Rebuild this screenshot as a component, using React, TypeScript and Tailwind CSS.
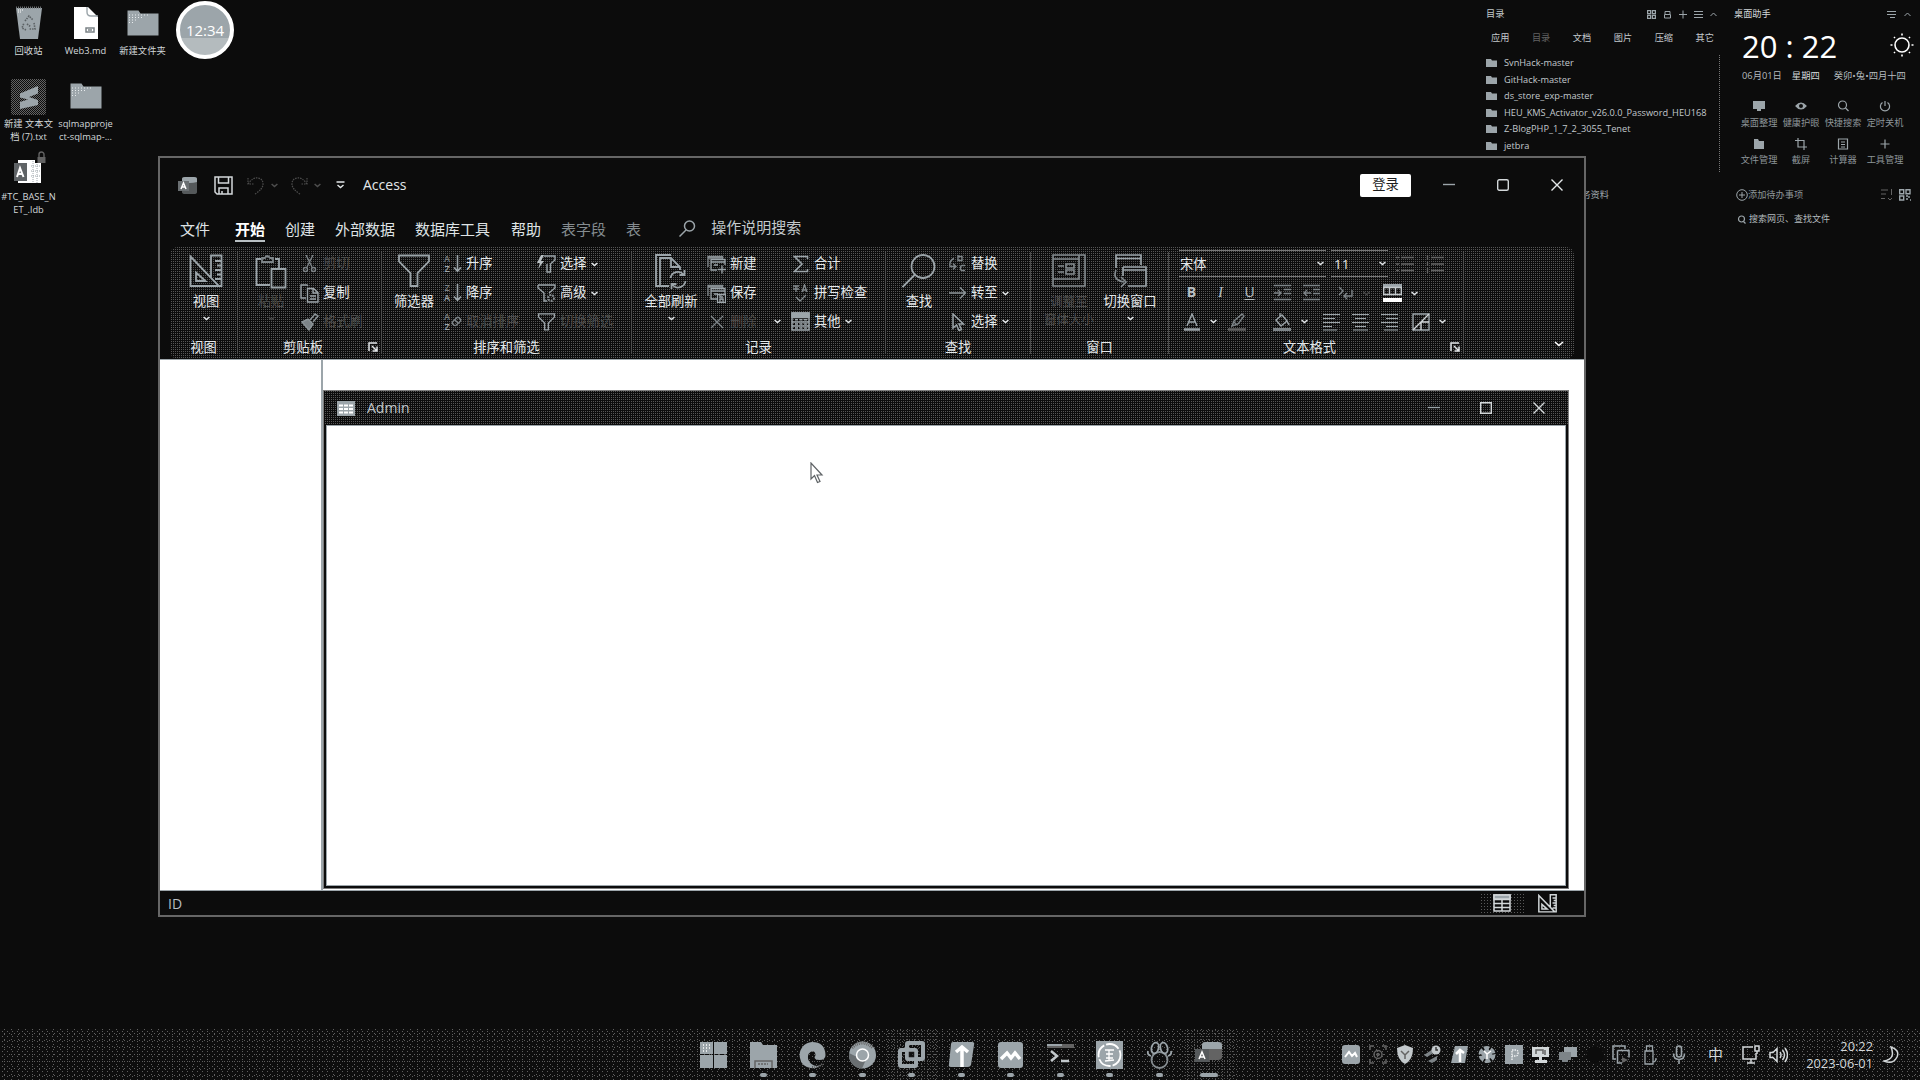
import React from "react";

type Kids = { children?: React.ReactNode };

const L = "#9ca5aa";
const D = "#636363";

function Svg({ w = 18, h = 18, box, c = L, sw = 1.4, cls = "", children }: Kids & { w?: number; h?: number; box?: string; c?: string; sw?: number; cls?: string }) {
  return (
    <svg width={w} height={h} viewBox={box ?? `0 0 ${w} ${h}`} fill="none" stroke={c} strokeWidth={sw} className={`shrink-0 ${cls}`}>
      {children}
    </svg>
  );
}

function Caret({ c = "#e4e8ea", cls = "" }: { c?: string; cls?: string }) {
  return (
    <Svg w={7} h={5} c={c} sw={1.5} cls={cls}>
      <path d="M.6 1l2.9 2.6L6.4 1" />
    </Svg>
  );
}

/* ---------- desktop icons ---------- */

function FolderBig() {
  return (
    <Svg w={32} h={28}>
      <path d="M.5 1.5h11l2 3h18v22h-31z" fill={L} stroke="none" />
      <path d="M2 6h20M2 8.500h14M2 11h8M2 13.500h4" stroke="#e8ecee" strokeWidth="1" strokeDasharray="1 2" />
    </Svg>
  );
}

function DeskItem({ icon, children }: Kids & { icon: React.ReactNode }) {
  return (
    <div className="flex h-[73px] w-[57px] flex-col items-center">
      <div className="flex h-[43px] items-center justify-center">{icon}</div>
      <div className="text-center text-[9.3px] leading-[13px] whitespace-nowrap text-[#d3d8da]">{children}</div>
    </div>
  );
}

function Desktop() {
  return (
    <div className="grid w-[171px] grid-cols-3 pt-[1px]">
      <DeskItem icon={
        <Svg w={28} h={34}>
          <path d="M1 2h26l-4 31H5z" fill={L} stroke="none" />
          <path d="M1 1.500h26" stroke="#6c7073" strokeWidth="2" strokeDasharray="1 1" />
          <path d="M10 15l4-5 4 4M19 17l1 6h-6M11 24l-4-2 2-5M12 18l4 3" stroke="#5b6063" strokeWidth="1.6" strokeDasharray="1.500 1" />
          <path d="M3 4h5M3 6h3" stroke="#fff" strokeDasharray="1 1" strokeWidth="1" />
        </Svg>}>回收站</DeskItem>
      <DeskItem icon={
        <Svg w={26} h={34}>
          <path d="M1 1h14l10 10v22H1z" fill="#fff" stroke="none" />
          <path d="M14 1v5q0 4 4 4h7" stroke={L} />
          <path d="M13 22h8v4h-8zM15 24h4" stroke="#7b8286" strokeWidth="1.5" />
        </Svg>}>Web3.md</DeskItem>
      <DeskItem icon={<FolderBig />}>新建文件夹</DeskItem>
      <DeskItem icon={
        <div className="mt-[3px] flex h-[36px] w-[35px] items-center justify-center rounded-[2px] bg-[#0c0c0c] bg-[conic-gradient(#636363_25%,#0c0c0c_0_50%,#636363_0_75%,#0c0c0c_0)] bg-[length:2px_2px]">
          <Svg w={22} h={26}>
            <path d="M2 9.500L20 2v7.500L11 13l9 3v5L2 25v-7l8-2.500-8-2z" fill={L} stroke="none" />
          </Svg>
        </div>}>新建 文本文<br />档 (7).txt</DeskItem>
      <DeskItem icon={<FolderBig />}>sqlmapproje<br />ct-sqlmap-...</DeskItem>
      <div />
      <DeskItem icon={
        <Svg w={34} h={34} cls="mt-[-2px] ml-[3px]">
          <path d="M5 9h17v3h6v20H5z" fill="#fff" stroke="none" />
          <path d="M18 15h10M18 20h10M18 25h10M20 10v22M24 13v19" stroke={L} strokeWidth="1" strokeDasharray="1 1" />
          <path d="M1 12h13v18H1z" fill="#5f6366" stroke="none" />
          <path d="M4 26l3-9 3.500 9M5 23h4.500" stroke="#fff" strokeWidth="2" />
          <path d="M24.500 6h8v6h-8z" fill={D} stroke="none" />
          <path d="M26 6V3.500a2.500 2.500 0 015 0V6" stroke={D} />
        </Svg>}>#TC_BASE_N<br />ET_.ldb</DeskItem>
    </div>
  );
}

/* ---------- right-hand widgets ---------- */

const files = ["SvnHack-master", "GitHack-master", "ds_store_exp-master", "HEU_KMS_Activator_v26.0.0_Password_HEU168", "Z-BlogPHP_1_7_2_3055_Tenet", "jetbra"];

function Catalog() {
  return (
    <div className="w-[236px] text-[9.2px] leading-[12px] text-[#c3c9cc]">
      <div className="flex h-[12px] items-center">
        <span>目录</span>
        <div className="ml-auto mr-[5px] flex items-center gap-[7px]">
          <Svg w={9} h={9} sw={1.2}><path d="M.6.6h3v3h-3zM5.400.6h3v3h-3zM.6 5.400h3v3h-3zM5.400 5.400h3v3h-3z" /></Svg>
          <Svg w={9} h={9} sw={1}><path d="M2 4V1.500h5V4M1.500 4.500h6V8h-6z" /></Svg>
          <Svg w={8} h={9} sw={1}><path d="M4 .5v8M0 4.500h8" /></Svg>
          <Svg w={9} h={9} sw={1}><path d="M0 1.500h9M0 4.500h9M0 7.500h9" /></Svg>
          <Svg w={7} h={5} sw={1}><path d="M.5 4l3-3 3 3" /></Svg>
        </div>
      </div>
      <div className="mt-[12px] flex justify-between pr-[8px] pl-[5px]">
        <span>应用</span><span className="text-[#636363]">目录</span><span>文档</span><span>图片</span><span>压缩</span><span>其它</span>
      </div>
      <div className="mt-[11px] mr-[2px] flex h-[117px] flex-col border-r border-dotted border-[#777]">
        {files.map((f) => (
          <div key={f} className="flex h-[16.5px] shrink-0 items-center gap-[7px]">
            <Svg w={11} h={8}><path d="M0 0h5l1 1.500h5V8H0z" fill={L} stroke="none" /></Svg>
            <span className="text-[9.220px] whitespace-nowrap">{f}</span>
          </div>
        ))}
      </div>
    </div>
  );
}

const tools: [string, React.ReactNode][] = [
  ["桌面整理", <path key="a" d="M0 1h12v8H8v2H4V9H0z" fill={L} stroke="none" />],
  ["健康护眼", <g key="b"><path d="M1 6q5-6 10 0q-5 6-10 0z" fill={L} /><circle cx="6" cy="6" r="2" fill="#0c0c0c" stroke="none" /></g>],
  ["快捷搜索", <g key="c"><circle cx="5.500" cy="5" r="4" /><path d="M8.500 8l3 3" /></g>],
  ["定时关机", <path key="d" d="M6 1v5M3.500 2.500a4.600 4.600 0 105 0" />],
  ["文件管理", <path key="e" d="M1 1h4l1 2h5v8H1z" fill={L} stroke="none" />],
  ["截屏", <path key="f" d="M3 0v9h9M0 2.500h9V12" />],
  ["计算器", <path key="g" d="M1.500 1h9v10h-9zM4 4h4M4 6.500h4M4 9h4" />],
  ["工具管理", <path key="h" d="M6 1.500v9M1.500 6h9" />],
];

function Helper() {
  return (
    <div className="w-[180px] text-[9.2px] leading-[12px] text-[#b4bbbe]">
      <div className="flex h-[12px] items-center text-[#d3d8da]">
        <span>桌面助手</span>
        <div className="ml-auto mr-[3px] flex items-center gap-[8px]">
          <Svg w={9} h={7} sw={1}><path d="M0 .5h9M0 3.500h9M3 6.500h5" /></Svg>
          <Svg w={7} h={5} sw={1}><path d="M.5 4l3-3 3 3" /></Svg>
        </div>
      </div>
      <div className="mt-[5px] flex h-[42px] items-center">
        <span className="ml-[8px] text-[31px] leading-[42px] whitespace-pre text-white [font-family:'Open_Sans','Noto_Sans',sans-serif]">20 : 22</span>
        <Svg w={24} h={24} c="#fff" sw={1.6} cls="ml-auto mt-[-3px]">
          <circle cx="12" cy="12" r="7" />
          <path d="M12 .5v2M12 21.500v2M.5 12h2M21.500 12h2M4 4l1 1M19 19l1 1M4 20l1-1M19 5l1-1" />
        </Svg>
      </div>
      <div className="mt-[2px] ml-[8px] flex h-[14px] items-center text-[9.300px] whitespace-nowrap">
        <span>06月01日</span><span className="ml-[10px] text-[#d3d8da]">星期四</span><span className="ml-[14px]">癸卯•兔•四月十四</span>
      </div>
      <div className="mt-[17px] grid grid-cols-4 pr-[8px] pl-[4px]">
        {tools.map(([t, p]) => (
          <div key={t} className="flex h-[37.500px] flex-col items-center">
            <Svg w={12} h={12} sw={1.2}>{p}</Svg>
            <span className="mt-[4.500px] whitespace-nowrap text-[#8d9599]">{t}</span>
          </div>
        ))}
      </div>
      <div className="mt-[13px] ml-[2px] flex h-[14px] items-center">
        <Svg w={12} h={12} sw={1}><circle cx="6" cy="6" r="5.300" /><path d="M6 3v6M3 6h6" /></Svg>
        <span className="text-[#8d9599]">添加待办事项</span>
        <Svg w={12} h={12} sw={1} c={D} cls="ml-auto"><path d="M0 1h7M0 5h5M0 9.500h4M10.500 0v6M7 9l2 2 2-2" /></Svg>
        <Svg w={12} h={12} sw={1.4} cls="ml-[6px] mr-[3px]"><path d="M.7.7h4v4h-4zM7 .7h4v4H7zM.7 7h4v4h-4zM7 7h2M10 7v2M7 10h2M11 11h1" /></Svg>
      </div>
      <div className="mt-[10px] ml-[3px] flex h-[14px] items-center gap-[3px]">
        <Svg w={9} h={9} sw={1.2}><circle cx="4.500" cy="4" r="3" /><path d="M6.500 6.500l2 2" /></Svg>
        <span className="text-[9px]">搜索网页、查找文件</span>
      </div>
    </div>
  );
}

/* ---------- Access glyphs ---------- */

function AccessLogo() {
  return (
    <Svg w={19} h={19}>
      <path d="M4 3q0-2 3-2h9q3 0 3 2v13q0 2-3 2H7q-3 0-3-2z" fill="#55595b" stroke="none" />
      <path d="M4 3q0-2 3-2h9q3 0 3 2v3q-7 2-15 0z" fill={L} stroke="none" />
      <path d="M0 5h11v10H0z" fill="#6a6f72" stroke="none" />
      <path d="M3 13l2.500-6L8 13M4 11h3" stroke="#fff" strokeWidth="1.5" />
    </Svg>
  );
}

function Ruler({ s = 34, c = L, sw = 1.8 }: { s?: number; c?: string; sw?: number }) {
  return (
    <Svg w={s} h={s} box="0 0 34 34" c={c} sw={sw}>
      <path d="M1.500 2.500L30 32H1.500zM7 18.500L16.500 27H7zM22 24V1.500h10.500V32H30M26 7h6M28 11.500h4M26 16h6M28 20.500h4M26 25h6" />
    </Svg>
  );
}

function Funnel({ w = 32, h = 34, c = L, sw = 1.8 }: { w?: number; h?: number; c?: string; sw?: number }) {
  return (
    <Svg w={w} h={h} box="0 0 32 34" c={c} sw={sw}>
      <path d="M1 1.500h30v6L19.500 19v13h-7V19L1 7.500z" />
    </Svg>
  );
}

function SortIcon({ a, b, clear }: { a: string; b: string; clear?: boolean }) {
  return (
    <div className="flex w-[19px] shrink-0 items-center">
      <div className="flex w-[8px] flex-col items-center text-[9px] leading-[10px] font-semibold text-[#7a8083]">
        <span>{a}</span><span className="text-[#9ca5aa]">{b}</span>
      </div>
      {clear ? (
        <Svg w={11} h={18} c="#7d8488"><rect x="1" y="6" width="9" height="5" rx="2" transform="rotate(-45 5.500 8.500)" /><path d="M4 7l3 3" /></Svg>
      ) : (
        <Svg w={11} h={18} c={L} sw={1.6}><path d="M6.500 0v16M3 12.500l3.500 3.800L10 12.500" /></Svg>
      )}
    </div>
  );
}

function Align({ k }: { k: number }) {
  const d = ["M0 1.500h17M0 5.500h12M0 9.500h17M0 13.500h9M0 17h14", "M0 1.500h17M3 5.500h11M0 9.500h17M3 13.500h11M1 17h15", "M0 1.500h17M5 5.500h12M0 9.500h17M5 13.500h12M3 17h14"][k];
  return <Svg w={17} h={18} sw={1.1}><path d={d} /></Svg>;
}

/* ---------- ribbon building blocks ---------- */

function Group({ w, title, launcher, children }: Kids & { w: string; title: string; launcher?: boolean }) {
  return (
    <div className={`flex h-full shrink-0 ${w}`}>
      <div className="flex min-w-0 flex-1 flex-col">
        <div className="flex h-[86px]">{children}</div>
        <div className={`flex h-[22px] items-center ${launcher ? "pr-[3px] pl-[0px]" : ""}`}>
          <span className="mt-[-1px] flex-1 text-center">{title}</span>
          {launcher && (
            <Svg w={10} h={10} c="#e4e8ea" sw={1.5}><path d="M1 9V1h8M4 4l5 5M9 4.500V9H4.500" /></Svg>
          )}
        </div>
      </div>
      <div className="mt-[2px] h-[102px] w-px bg-[#4c4c4c]" />
    </div>
  );
}

function Big({ w, icon, label, caret, dim }: { w: string; icon: React.ReactNode; label: React.ReactNode; caret?: boolean; dim?: boolean }) {
  return (
    <div className={`flex shrink-0 flex-col items-center pt-[4px] ${w}`}>
      <div className="flex h-[36px] items-start justify-center">{icon}</div>
      <div className={`mt-[3px] text-center leading-[16px] whitespace-nowrap ${dim ? "text-[#4a4a4a]" : ""}`}>{label}</div>
      {caret && <Caret c={dim ? "#4a4a4a" : undefined} cls="mt-[7px]" />}
    </div>
  );
}

function Small({ icon, label, caret, dim, gap = "ml-[4px]" }: { icon: React.ReactNode; label: string; caret?: boolean; dim?: boolean; gap?: string }) {
  return (
    <div className="flex h-[28.700px] items-center">
      <div className="flex w-[19px] shrink-0 items-center justify-center">{icon}</div>
      <span className={`mt-[-2px] ml-[4px] whitespace-nowrap ${dim ? "text-[#4a4a4a]" : ""}`}>{label}</span>
      {caret && <Caret cls={gap} />}
    </div>
  );
}

function Cell({ w = "w-[29px]", children }: Kids & { w?: string }) {
  return <div className={`flex h-full shrink-0 items-center justify-center ${w}`}>{children}</div>;
}

const FormSm = ({ k }: { k: string }) => (
  <Svg w={19} h={19} sw={1.3}>
    <path d="M1 12V1.500h14.500V4M1 3h14" stroke="#858c90" />
    <path d="M10 15H4V4.500h14V10M4 7h14M7 10h4" />
    <path d={k} stroke="#9ca5aa" />
  </Svg>
);

function Ribbon() {
  return (
    <div className="relative mx-[10px] flex h-[112px] rounded-[8px] bg-[#0c0c0c] bg-[conic-gradient(#565656_25%,#0c0c0c_0)] bg-[length:2px_2px] pt-[3px] text-[13.300px] leading-[16px] text-[#e4e8ea]">
      <Group w="w-[68px]" title="视图">
        <Big w="w-[72px]" icon={<Ruler />} label="视图" caret />
      </Group>

      <Group w="w-[144px]" title="剪贴板" launcher>
        <Big w="ml-[8px] w-[50px]" dim caret label="粘贴" icon={
          <Svg w={32} h={35} sw={1.8}>
            <path d="M6 5H1.500v26H15M20 5h4v9" /><path d="M7 8V4h3q2-4 5 0h3v4z" stroke="#7d8488" /><path d="M16.500 15h14v18.500h-14z" />
          </Svg>} />
        <div className="ml-[4px] flex flex-col">
          <Small dim label="剪切" icon={<Svg c="#7d8488"><path d="M5 0l6 12M12 0L6 12" /><circle cx="4.500" cy="14.500" r="2" /><circle cx="12.500" cy="14.500" r="2" /></Svg>} />
          <Small label="复制" icon={<Svg w={19} h={19}><path d="M6 14H1V1h6l1 1M7.500 4.500h6l4.500 4V18H7.500zM13 5v4h5M10 12h6M10 15h6" /></Svg>} />
          <Small dim label="格式刷" icon={<Svg c="#8d9599"><path d="M1 9l6-3 5 5-4 6z" fill="#7d8488" /><path d="M9 7l5-6 3 2-5 6" /></Svg>} />
        </div>
      </Group>

      <Group w="w-[250px]" title="排序和筛选">
        <Big w="ml-[4px] w-[56px]" label="筛选器" icon={<Funnel />} />
        <div className="ml-[1px] flex w-[94px] flex-col">
          <Small label="升序" icon={<SortIcon a="A" b="Z" />} />
          <Small label="降序" icon={<SortIcon a="Z" b="A" />} />
          <Small dim label="取消排序" icon={<SortIcon a="A" b="Z" clear />} />
        </div>
        <div className="flex flex-col">
          <Small caret label="选择" icon={<Svg w={19} h={18}><path d="M7 1h11v4l-4.500 4v8h-3.500V9" /><path d="M4 0L0 8h3l-2 6 6-8H4l3-6z" fill="#b8bfc2" stroke="none" /></Svg>} />
          <Small caret label="高级" icon={<Svg w={19} h={19}><path d="M1 1h17v3l-6 5M1 1v3l6 5v8h3" /><circle cx="14" cy="14" r="3" stroke="#858c90" strokeWidth="2" strokeDasharray="2 1" /></Svg>} />
          <Small dim label="切换筛选" icon={<Funnel w={19} h={18} sw={2.4} />} />
        </div>
      </Group>

      <Group w="w-[254px]" title="记录">
        <Big w="ml-[8px] w-[62px]" label="全部刷新" caret icon={
          <Svg w={33} h={35} sw={1.8}>
            <path d="M16 1H1v31h4" />
            <path d="M14 32H5V4h11l9 9v3M16 4v9h9" />
            <path d="M15.500 24a7.500 7.500 0 0113-3.500M30.500 27a7.500 7.500 0 01-13 4M29.500 16v5h-5M16.500 35v-5h5" />
          </Svg>} />
        <div className="ml-[5px] flex w-[84px] flex-col">
          <Small label="新建" icon={<FormSm k="M11 14.500h8M15 10.500v8" />} />
          <Small label="保存" icon={<FormSm k="M10.500 10.500h8v8h-8zM13 18v-3h3v3M13 11v2h3" />} />
          <Small dim caret gap="ml-[17px]" label="删除" icon={<Svg w={16} h={16} c="#7d8488"><path d="M2 2l12 12M14 2L2 14" /></Svg>} />
        </div>
        <div className="flex flex-col">
          <Small label="合计" icon={<Svg w={16} h={18} sw={1.6}><path d="M14.500 4V1.500H1.500L9 9l-7.500 7.500h13V14" /></Svg>} />
          <Small label="拼写检查" icon={<Svg w={17} h={18} c="#858c90" sw={1.3}><path d="M1 2h6M4 2v6M1 5h6M10 8l2.500-7L15 8M11 6h3M4 13l4 4 6-6" /></Svg>} />
          <Small caret label="其他" icon={<Svg w={19} h={19} sw={1.5}><path d="M1 1h17v17H1zM1 5.500h17M1 10h17M1 14h17" /><path d="M1 1h17v4H1z" fill={L} /><path d="M4 7.700h12M4 12h12M4 16h12" strokeDasharray="3 1.500" /></Svg>} />
        </div>
      </Group>

      <Group w="w-[145px]" title="查找">
        <Big w="ml-[8px] w-[50px]" label="查找" icon={<Svg w={34} h={34} sw={1.8}><circle cx="21" cy="12.500" r="11.500" /><path d="M13 20.500L.5 33" /></Svg>} />
        <div className="ml-[4px] flex flex-col">
          <Small label="替换" icon={<Svg c="#7d8488"><path d="M9 1.500h4v4H9zM9 5V0M5 3.500q-5 2-4 8h5M4 8.500l3 3-3 3M16 10.500h-3q-1.500 0-1.500 2.500t1.500 2.500h3" /></Svg>} />
          <Small caret label="转至" icon={<Svg c="#8d9599"><path d="M0 9h16M11 3.500L16.500 9 11 14.500" /></Svg>} />
          <Small caret label="选择" icon={<Svg sw={1.5}><path d="M4 1v14l3.500-3 2.500 5.500 2.500-1L10 11h4.500z" /></Svg>} />
        </div>
      </Group>

      <Group w="w-[138px]" title="窗口">
        <Big w="ml-[2px] w-[72px]" dim label={<span className="block text-[12.500px] leading-[18px]">调整至<br />窗体大小</span>} icon={
          <Svg w={34} h={34} c="#858c90" sw={1.6}><path d="M1 1h32v31H1zM1 5h26v20H1M27 1v24M6 12h6M6 18h6M14 10h8v4h-8zM14 16h8v4h-8z" /></Svg>} />
        <Big w="ml-[-4px] w-[58px]" caret label="切换窗口" icon={
          <Svg w={34} h={34} sw={1.7}><path d="M3 14V1h25v10M3 4.500h25" /><path d="M10 13h23v19H15M10 13v9M10 16h23" /><path d="M3 16q-4 10 8 12M8 23l5 5-5 5" stroke="#858c90" /></Svg>} />
      </Group>

      <Group w="w-[295px]" title="文本格式" launcher>
        <div className="flex flex-col">
          <div className="flex h-[28.700px] items-start pl-[10px]">
            <div className="flex h-[27px] w-[147px] items-center justify-between border-y border-[#777] px-[1px] pr-[2px]"><span>宋体</span><Caret /></div>
            <div className="ml-[5px] flex h-[27px] w-[57px] items-center justify-between border-y border-[#777] pr-[2px] pl-[3px]"><span className="text-[13.500px]">11</span><Caret /></div>
            <div className="flex h-[27px] items-center pl-[8px]">
              <Svg w={18} h={18} c={D}><path d="M5 2.500h13M5 9h13M5 15.500h13M0 2.500h3M0 9h3M0 15.500h3" /></Svg>
              <Svg w={18} h={18} c={D} cls="ml-[12px]"><path d="M5 2.500h13M5 9h13M5 15.500h13M1.500 0v5M1.500 7v4M1.500 13v5" /></Svg>
            </div>
          </div>
          <div className="flex h-[28.700px] items-center pl-[8px] text-[#b8bfc2]">
            <Cell><span className="mt-[-2px] text-[14px] font-bold">B</span></Cell>
            <Cell><span className="mt-[-2px] text-[15px] italic [font-family:'Liberation_Serif',serif]">I</span></Cell>
            <Cell><span className="mt-[-2px] text-[14px] underline underline-offset-2">U</span></Cell>
            <Cell w="ml-[3px] w-[30px]"><Svg w={17} h={18} c="#7d8488"><path d="M0 1.500h17M10 5.500h7M10 9.500h7M0 15.500h17M0 9h7M4 6l3 3-3 3" /></Svg></Cell>
            <Cell><Svg w={17} h={18} c="#7d8488"><path d="M0 1.500h17M10 5.500h7M10 9.500h7M0 15.500h17M1 9h7M4 6L1 9l3 3" /></Svg></Cell>
            <Cell w="ml-[8px] w-[24px]"><Svg w={16} h={16} c="#7d8488"><path d="M1 2l4 4-4 4M14 5v6H6M9 8l-3 3 3 3" /></Svg></Cell>
            <Cell w="w-[16px]"><Caret c="#4a4a4a" /></Cell>
            <Cell w="ml-[2px] w-[32px]"><Svg w={19} h={19} c="#c3c9cc"><path d="M0 0h19v4H0z" fill={L} stroke="none" /><path d="M.7 3.500h17.600v7H.7zM6.500 3v8M12.500 3v8" /><path d="M0 14h19v4H0z" fill="#fff" stroke="none" /></Svg></Cell>
            <Cell w="w-[12px]"><Caret /></Cell>
          </div>
          <div className="flex h-[28.700px] items-center pl-[8px]">
            <Cell><Svg w={16} h={18}><path d="M3 13l5-12 5 12M5 9h6" /><path d="M0 16.500h16" strokeWidth="2.500" /></Svg></Cell>
            <Cell w="w-[14px]"><Caret /></Cell>
            <Cell w="w-[33px]"><Svg w={18} h={18} c="#7d8488"><path d="M4 13l2-5 8-7 2 2-6 8zM5 8l4 4" /><path d="M0 16.500h18" strokeWidth="2.500" stroke={D} /></Svg></Cell>
            <Cell w="ml-[14px] w-[30px]"><Svg w={18} h={18}><path d="M3 7l6-5 5 6-6 5zM7 4V0M14 8l2 4" /><path d="M0 16.500h18" strokeWidth="3" stroke="#7d8488" /></Svg></Cell>
            <Cell w="w-[14px]"><Caret /></Cell>
            <Cell w="ml-[6px] w-[29px]"><Align k={0} /></Cell>
            <Cell><Align k={1} /></Cell>
            <Cell><Align k={2} /></Cell>
            <Cell w="ml-[1px] w-[32px]"><Svg w={18} h={18}><path d="M1 1h16v16H1z" /><path d="M1 17L17 1M9 9v8M9 9h8" stroke="#d3d8da" /></Svg></Cell>
            <Cell w="w-[10px]"><Caret /></Cell>
          </div>
        </div>
      </Group>
      <div className="flex flex-1 items-end justify-end pr-[10px] pb-[12px]">
        <Svg w={10} h={6} c="#fff" sw={1.6}><path d="M1 1l4 3.500L9 1" /></Svg>
      </div>
    </div>
  );
}

/* ---------- Access window ---------- */

function TitleBar() {
  return (
    <div className="flex h-[54px] items-center pl-[18px] text-[14px] text-[#e4e8ea]">
      <AccessLogo />
      <Svg w={19} h={19} c="#d3d8da" sw={1.5} cls="ml-[17px]"><path d="M1 1h17v17H3l-2-2zM4.500 1v6h10V1M5 18v-6h9v6M8 15v3" /></Svg>
      <Svg w={18} h={19} c="#4e4e4e" sw={1.2} cls="ml-[14px]"><path d="M1 2v6h6M1 8q5-7 10-6t5 6-8 10" strokeDasharray="1.500 1" /></Svg>
      <Caret c="#4e4e4e" cls="ml-[6px]" />
      <Svg w={18} h={19} c="#4e4e4e" sw={1.2} cls="ml-[12px]"><path d="M17 2v6h-6M17 8Q12 1 7 2T2 8t8 10" strokeDasharray="1.500 1" /></Svg>
      <Caret c="#4e4e4e" cls="ml-[6px]" />
      <Svg w={9} h={8} c="#e4e8ea" sw={1.4} cls="ml-[15px]"><path d="M.5 1h8M1.500 4l3 2.500 3-2.500" /></Svg>
      <span className="mt-[-1px] ml-[18px]">Access</span>
      <div className="mr-[1px] ml-auto flex items-center">
        <div className="flex h-[23px] w-[51px] items-center justify-center rounded-[2px] bg-white text-[13.300px] text-[#1c1c1c]">登录</div>
        <Svg w={12} h={12} sw={1.4} cls="ml-[32px]"><path d="M0 5.500h12" /></Svg>
        <Svg w={12} h={12} c="#d3d8da" sw={1.4} cls="ml-[42px]"><rect x=".7" y=".7" width="10.600" height="10.600" rx="1.500" /></Svg>
        <Svg w={12} h={12} c="#e4e8ea" sw={1.4} cls="mr-[20px] ml-[42px]"><path d="M.5.5l11 11M11.500.5l-11 11" /></Svg>
      </div>
    </div>
  );
}

function Tabs() {
  return (
    <div className="flex h-[35px] items-center pb-[2px] pl-[20px] text-[15px] leading-[20px] whitespace-nowrap text-[#dfe3e5]">
      <span>文件</span>
      <span className="mt-[3px] ml-[25px] border-b-2 border-[#b8bfc2] leading-[21px] font-bold text-white">开始</span>
      <span className="ml-[20px]">创建</span>
      <span className="ml-[20px]">外部数据</span>
      <span className="ml-[20px]">数据库工具</span>
      <span className="ml-[21px]">帮助</span>
      <span className="ml-[20px] text-[#858c90]">表字段</span>
      <span className="ml-[20px] text-[#858c90]">表</span>
      <Svg w={17} h={17} sw={1.5} cls="ml-[38px]"><circle cx="10.500" cy="6" r="5" /><path d="M7 10l-6.500 6.500" /></Svg>
      <span className="mt-[-3px] ml-[15px] text-[#c3c9cc]">操作说明搜索</span>
    </div>
  );
}

function AccessWindow() {
  return (
    <div className="absolute top-[156px] left-[158px] flex h-[761px] w-[1428px] flex-col border-2 border-[#666] bg-[#0c0c0c]">
      <TitleBar />
      <Tabs />
      <Ribbon />
      <div className="flex min-h-0 flex-1 border-b border-[#9ca5aa] bg-white">
        <div className="w-[163px] border-t border-r-2 border-[#9ca5aa]" />
        <div className="flex flex-1 border-t border-[#9ca5aa] pt-[30px] pr-[15px] pb-[1px]">
          <div className="flex flex-1 flex-col border border-[#7d7d7d] bg-[#0c0c0c] pr-[2px] pb-[2px] pl-[2px]">
            <div className="ml-[-2px] mr-[-2px] flex h-[34px] items-center bg-[#0c0c0c] bg-[conic-gradient(#565656_25%,#0c0c0c_0)] bg-[length:2px_2px] pl-[13px] text-[14px] text-[#c3c9cc]">
              <Svg w={18} h={15}><path d="M0 0h18v15H0z" fill={L} stroke="none" /><path d="M2 4.500h14M2 8h14M2 11.500h14" stroke="#fff" strokeWidth="2" strokeDasharray="4 1" /></Svg>
              <span className="mt-[-1px] ml-[12px]">Admin</span>
              <div className="ml-auto flex items-center">
                <Svg w={12} h={12} sw={1.3}><path d="M0 5.500h12" /></Svg>
                <Svg w={12} h={12} c="#d3d8da" sw={1.4} cls="ml-[40px]"><path d="M.7.7h10.600v10.600H.7z" /></Svg>
                <Svg w={12} h={12} c="#d3d8da" sw={1.4} cls="mr-[23px] ml-[41px]"><path d="M.5.5l11 11M11.500.5l-11 11" /></Svg>
              </div>
            </div>
            <div className="flex-1 border border-[#9ca5aa] bg-white" />
          </div>
        </div>
      </div>
      <div className="flex h-[24px] items-center pl-[8px] text-[14px] text-[#b8bfc2]">
        <span>ID</span>
        <div className="ml-auto flex h-[21px] w-[44px] items-center justify-center bg-[#0c0c0c] bg-[radial-gradient(#5a5a5a_0.6px,transparent_0.7px)] bg-[length:3px_3px]">
          <Svg w={18} h={18} c="#d3d8da" sw={1.5}><path d="M1 1h16v16H1z" fill="#0c0c0c" /><path d="M1 5.500h16M1 9.500h16M1 13.500h16M9 5v12" /><path d="M1 1h16v4H1z" fill={L} /></Svg>
        </div>
        <div className="mr-[27px] ml-[14px]"><Ruler s={19} c="#d3d8da" sw={2.6} /></div>
      </div>
    </div>
  );
}

/* ---------- taskbar ---------- */

const apps: React.ReactNode[] = [
  <g key="0"><path d="M0 1h13v12H0zM14 1h13v12H14zM0 14h13v13H0zM14 14h13v13H14z" fill={L} /><path d="M3 4h8M3 7h8M3 10h6" stroke="#fff" strokeDasharray="1 2" /></g>,
  <g key="1"><path d="M0 1h11l2 3h14v23H0z" fill={L} /><path d="M5 27v-7h17v7" stroke={D} strokeWidth="1.5" /><path d="M8 23h10" stroke={D} strokeDasharray="2 1" /></g>,
  <g key="2"><path d="M1 17A13 13 0 0113 1q13 0 13.500 13 0 5-6 5-5 0-5-3 2-2 0-5-3-2-6 2-2 6 3 10 5 4 11 0-5 5-12 4Q2 25 1 17z" fill={L} /><path d="M13 26q7 1 11-4" stroke={D} strokeWidth="2" strokeDasharray="1 1" /></g>,
  <g key="3"><circle cx="13.500" cy="14" r="13.500" fill={L} /><path d="M0 12a13.500 13.500 0 0013 15.500l4-9-8-2z" fill="#6a6f72" /><path d="M3 7q10-10 21 0" stroke={D} strokeWidth="3" strokeDasharray="1 1" /><circle cx="13.500" cy="14" r="6" fill={L} stroke="#fff" strokeWidth="1.5" /></g>,
  <g key="4" stroke={L} strokeWidth="4"><rect x="9" y="2" width="16" height="16" rx="1" /><rect x="2" y="9" width="16" height="16" rx="1" /><path d="M11.500 11.500h4v4h-4z" stroke="#161616" strokeWidth="1.500" /></g>,
  <g key="5"><path d="M5 1h19q3 0 2 3l-3 20q-1 2-3 2H3q-3 0-2-3L3 3q0-2 2-2z" fill={L} /><path d="M14 26V7M8 11l6-5 6 5" stroke="#fff" strokeWidth="3.500" /></g>,
  <g key="6"><rect x="1" y="1" width="25" height="26" rx="3" fill={L} /><path d="M4 18l6-6 4 5 4-5 5 6" stroke="#fff" strokeWidth="3.500" /></g>,
  <g key="7"><path d="M0 3h27v4H0z" fill={D} /><path d="M0 4h15" stroke={L} strokeWidth="2" /><path d="M4 10l6 5-6 5M14 20h8" stroke="#c3c9cc" strokeWidth="2.500" /></g>,
  <g key="8"><path d="M0 0h27v28H0z" fill={L} /><circle cx="13.500" cy="14" r="11" stroke="#fff" strokeWidth="1.800" strokeDasharray="14 2" /><path d="M9 9h9M10 13h7M10 17h7M13 9v11M9 20l9-1" stroke="#fff" strokeWidth="1.300" /></g>,
  <g key="9" stroke={L} strokeWidth="1.800"><circle cx="13.500" cy="19" r="8" stroke="#858c90" /><ellipse cx="9" cy="7" rx="3.500" ry="5.500" transform="rotate(15 9 7)" /><ellipse cx="18" cy="7" rx="3.500" ry="5.500" transform="rotate(-15 18 7)" /><path d="M5 15q-4-1-3-5M22 15q4-1 3-5" /></g>,
  <g key="10"><path d="M7 4q0-3 4-3h12q4 0 4 3v12q0 3-4 3H11q-4 0-4-3z" fill="#636363" /><path d="M7 4q0-3 4-3h12q4 0 4 3v4H7z" fill={L} /><path d="M0 8h14v13H0z" fill="#55595b" /><path d="M4 18l3-7 3 7M5 16h4" stroke="#fff" strokeWidth="1.500" /></g>,
];

const tray: React.ReactNode[] = [
  <g key="0"><rect width="18" height="19" rx="3" fill={L} /><path d="M3 12l4-5 3 4 3-3 2 4" stroke="#fff" strokeWidth="2" /></g>,
  <g key="1" stroke={D} strokeWidth="1.500"><path d="M1 5V1h4M13 1h4v4M17 14v4h-4M5 18H1v-4" /><circle cx="9" cy="9.500" r="4" /><circle cx="9" cy="9.500" r="1" /></g>,
  <g key="2"><path d="M9 0l8 3q0 12-8 16Q1 15 1 3z" fill="#c3c9cc" /><path d="M5 6l4 4 4-4M9 10v4" stroke={D} strokeWidth="1.500" /></g>,
  <g key="3"><path d="M1 10l9-6 2 3-8 5zM5 16l9-5v4l-5 3z" fill="#7d8488" /><circle cx="13" cy="5" r="4.500" fill="#c3c9cc" /><path d="M13 2v3h2" stroke="#333" /></g>,
  <g key="4"><path d="M4 1h13l-3 17H0z" fill={L} /><path d="M9 17V6M5 9l4-4 4 3" stroke="#fff" strokeWidth="2.500" /></g>,
  <g key="5"><circle cx="9" cy="9.500" r="6" stroke={L} strokeWidth="5" strokeDasharray="4.700 1.500" /><circle cx="9" cy="9.500" r="5" fill={L} /><path d="M6 6l3 3 4-3M9 9v5" stroke="#fff" strokeWidth="1.500" /></g>,
  <g key="6"><path d="M0 0h18v19H0z" fill={L} /><path d="M7 15V5h4q2 0 2 3t-2 3H7" stroke="#f0f2f3" strokeDasharray="1.500 1" /></g>,
  <g key="7"><path d="M0 2h17v10H0zM7 12h3v5H7zM3 15h12v3H3z" fill="#d3d8da" /><path d="M4 9V5h7v4M13 5v5" stroke={D} strokeWidth="1.500" /></g>,
  <g key="8"><path d="M5 2h13v10H5z" fill={L} /><path d="M0 7h12v8H0zM3 14h6v3H3z" fill="#7d8488" /></g>,
  <g key="9"><circle cx="9" cy="9.500" r="8.500" fill="#0c0c0c" /></g>,
];

function Taskbar() {
  return (
    <div className="flex h-[51px] items-center bg-[#0e0e0e] bg-[radial-gradient(#5f5f5f_0.6px,transparent_0.7px),radial-gradient(#5f5f5f_0.6px,transparent_0.7px),radial-gradient(#5f5f5f_0.6px,transparent_0.7px)] bg-[length:5px_5px,5px_7px,7px_5px] bg-[position:0px_0px,2px_1px,1px_3px] text-[#d3d8da]">
      <div className="flex h-full pl-[689px]">
        {apps.map((a, i) => (
          <div key={i} className={`flex h-full w-[49.500px] flex-col items-center pt-[12px] ${i === 10 || i === 4 ? "bg-[radial-gradient(#4e4e4e_0.6px,transparent_0.7px)] bg-[length:3px_3px]" : ""}`}>
            <Svg w={27} h={28} c="none">{a}</Svg>
            {i > 0 && <span className={`mt-[4px] h-[4px] rounded-full bg-[#9ca5aa] ${i === 10 ? "w-[18px]" : "w-[7px]"}`} />}
          </div>
        ))}
      </div>
      <div className="ml-auto flex items-center">
        <div className="flex gap-[9.100px]">
          {tray.map((t, i) => (
            <Svg key={i} w={18} h={19} c="none">{t}</Svg>
          ))}
        </div>
        <Svg w={18} h={19} cls="ml-[8px]" sw={1.5}><path d="M4 14H1V1h12v3M5.500 5.500H17v7M5.500 5.500V18H10" /><path d="M10 12l6 3-6 3z" fill={D} stroke="none" /></Svg>
        <Svg w={14} h={20} cls="ml-[13px]" sw={1.3}><path d="M2 6h8v13H2zM3.500 6V1h6v5M10 17q3 0 3-4" /></Svg>
        <Svg w={14} h={20} cls="ml-[15px]" sw={1.6}><rect x="4.500" y="1" width="5" height="11" rx="2.500" /><path d="M1.500 8.500q0 6 5.500 6t5.500-6M7 15v4" /></Svg>
        <span className="ml-[22px] text-[15px]">中</span>
        <Svg w={18} h={19} c="#d3d8da" cls="ml-[19px]" sw={1.5}><path d="M11 2H1v12h13V8M5 18h8M9 14v4" /><path d="M13 1h4v5h-4zM15 6v3" /></Svg>
        <Svg w={19} h={18} c="#d3d8da" cls="ml-[9px]" sw={1.500}><path d="M1 6.500h3l4-4v13l-4-4H1zM11 6q2 3 0 6M13.500 4q4 5 0 10M16 2q5 7 0 14" /></Svg>
        <div className="ml-[16px] w-[69px] text-right text-[12.800px] leading-[17px]">20:22<br />2023-06-01</div>
        <Svg w={16} h={18} c="#d3d8da" cls="mr-[21px] ml-[10px]" sw={1.5}><path d="M8 1q9 3 6 10-4 8-13 4 12-2 7-14z" /></Svg>
      </div>
    </div>
  );
}

export default function App() {
  return (
    <div className="relative flex h-[1080px] w-[1920px] flex-col overflow-hidden bg-[#0c0c0c] [font-family:'Open_Sans','Noto_Sans','Noto_Sans_CJK_SC',sans-serif]">
      <div className="flex min-h-0 flex-1 items-start">
        <Desktop />
        <div className="mt-[1px] ml-[5px] flex h-[58px] w-[58px] items-center justify-center rounded-full border-4 border-white bg-[linear-gradient(#9ca5aa_66%,#b4bbbe_66%)] text-[15px] text-white">12:34</div>
        <div className="ml-auto flex pt-[8px] pr-[6px]">
          <Catalog />
          <div className="ml-[12px]"><Helper /></div>
        </div>
      </div>
      <span className="absolute top-[188px] right-[311px] text-[9.200px] leading-[13px] text-[#9ca5aa]">务资料</span>
      <AccessWindow />
      <Taskbar />
      <svg className="absolute top-[462px] left-[810px]" width="14" height="22" viewBox="0 0 14 22" fill="#fff" stroke="#5f6366" strokeWidth="1.2">
        <path d="M1 1v16l3.500-3.500 3 7 2.500-1-3-6.500H12z" />
      </svg>
    </div>
  );
}
